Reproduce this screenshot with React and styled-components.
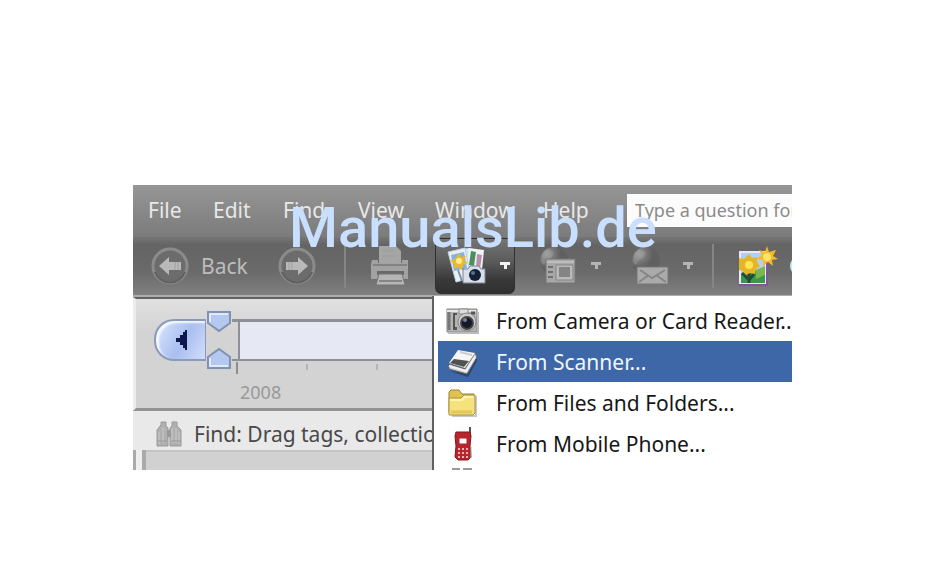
import React from "react";
import styled, { createGlobalStyle } from "styled-components";

const GlobalStyle = createGlobalStyle`
  * {
    box-sizing: border-box;
  }
  body {
    margin: 0;
    background: #fff;
    font-family: "Noto Sans", "Open Sans", sans-serif;
    font-size: 21px;
    line-height: 28px;
  }
  button, input {
    font: inherit;
    color: inherit;
    border: 0;
    padding: 0;
    margin: 0;
    background: none;
  }
  svg {
    display: block;
    flex: none;
  }
`;

const Page = styled.main`
  padding: 185px 158px 48px 133px;
`;

const AppWindow = styled.section`
  position: relative;
  overflow: hidden;
  background: #d3d3d3;
`;

const MenuBar = styled.nav`
  display: flex;
  align-items: center;
  height: 52px;
  padding: 0 0 2px 15px;
  overflow: hidden;
  color: #e8e8e8;
  background: linear-gradient(#969696, #7b7b7b);
`;

const MenuButton = styled.button`
  flex: none;
  width: ${(p) => p.$width}px;
  text-align: left;
`;

const Question = styled.input`
  flex: 1;
  min-width: 0;
  height: 33px;
  padding-left: 8px;
  background: #fcfcfc;
  font-size: 18px;
  &::placeholder {
    color: #8b8b8b;
    opacity: 1;
  }
`;

const Toolbar = styled.div`
  display: flex;
  align-items: center;
  height: 60px;
  padding-left: 18px;
  overflow: hidden;
  color: #bdbdbd;
  border-bottom: 2px solid #acacac;
  background: linear-gradient(#767676, #646464 14%, #6a6a6a 60%, #808080);
`;

const ToolButton = styled.button`
  display: flex;
  flex: none;
  align-items: center;
  gap: 12px;
  width: ${(p) => p.$width}px;
  height: 56px;
`;

const ActiveTool = styled(ToolButton)`
  padding-left: 11px;
  border: 1px solid #303030;
  border-radius: 0 0 6px 6px;
  background: linear-gradient(#747474, #5c5c5c 40%, #393939 75%, #303030);
`;

const Divider = styled.span`
  flex: none;
  width: 2px;
  height: 44px;
  margin-right: 24px;
  background: #858585;
`;

const Timeline = styled.div`
  height: 114px;
  padding: 11px 0 0 18px;
  border-top: 2px solid #626262;
  border-bottom: 3px solid #929292;
  border-left: 3px solid #ececec;
  background: linear-gradient(#e0e0e0, #d3d3d3 30%);
`;

const TrackRow = styled.div`
  display: flex;
  align-items: center;
  height: 60px;
`;

const Earlier = styled.button`
  display: flex;
  flex: none;
  align-items: center;
  justify-content: center;
  width: 52px;
  height: 42px;
  border: 2px solid #8b9abb;
  border-right-width: 1px;
  border-radius: 20px 0 0 20px;
  box-shadow: inset 3px 2px 2px #f4f8ff;
  background: linear-gradient(120deg, #dce7ff, #a9bff0 55%, #d3ddfa);
`;

const Handles = styled.div`
  display: flex;
  flex: none;
  flex-direction: column;
  justify-content: space-between;
  width: 26px;
  height: 60px;
`;

const TrackStart = styled.span`
  flex: none;
  width: 8px;
  height: 42px;
  border: solid #8f8f98;
  border-width: 3px 2px 2px 0;
`;

const Track = styled.div`
  flex: 1;
  height: 42px;
  border: solid #8f8f98;
  border-width: 3px 0 2px;
  background: #e6e9f4;
`;

const Ticks = styled.div`
  display: flex;
  gap: 68px;
  height: 20px;
  margin-top: -9px;
  padding-left: 82px;
`;

const Tick = styled.span`
  width: 2px;
  height: ${(p) => (p.$major ? 12 : 6)}px;
  margin-top: ${(p) => (p.$major ? 1 : 3)}px;
  background: ${(p) => (p.$major ? "#8d8d8d" : "#b5b5b5")};
`;

const Year = styled.div`
  padding-left: 86px;
  color: #999;
  font-size: 18px;
  line-height: 22px;
`;

const FindBar = styled.div`
  display: flex;
  align-items: center;
  gap: 11px;
  height: 39px;
  padding: 6px 0 0 22px;
  color: #484848;
  white-space: nowrap;
  background: #e9e9e9;
`;

const Photos = styled.div`
  height: 20px;
  border-left: 3px solid #aaa;
  background: #d1d1d1;
  box-shadow: inset 6px 0 #eee, inset 10px 0 #aaa, inset 0 2px #c4c4c4;
`;

const Dropdown = styled.div`
  position: absolute;
  top: 111px;
  right: 0;
  left: 299px;
  padding: 4px 0 0 4px;
  border-left: 2px solid #606060;
  background: #fff;
`;

const MenuItem = styled.button`
  display: flex;
  align-items: center;
  gap: 16px;
  width: 100%;
  height: 41px;
  padding-left: 8px;
  white-space: nowrap;
  color: ${(p) => (p.$selected ? "#eef6ff" : "#171717")};
  background: ${(p) => (p.$selected ? "#3e67a7" : "#fff")};
`;

const Watermark = styled.div`
  position: absolute;
  top: 196px;
  left: 289px;
  color: #c9dfff;
  font-family: Roboto, sans-serif;
  font-size: 56px;
  font-weight: 500;
  line-height: 64px;
`;

function CircleArrow({ flip }) {
  return (
    <svg width="38" height="38" viewBox="0 0 38 38" aria-hidden="true">
      <circle cx="19" cy="19" r="17" fill="#6c6c6c" stroke="#8b8b8b" strokeWidth="3" />
      <path d="M4 25A16 16 0 0 0 34 25" fill="none" stroke="#606060" strokeWidth="2" />
      <path
        d="M8 19 18 10v5h12v8H18v5Z"
        fill="#b9b9b9"
        transform={flip ? "translate(38 0) scale(-1 1)" : undefined}
      />
      <path
        d="M24 15v8M27 15v8"
        stroke="#a0a0a0"
        transform={flip ? "translate(38 0) scale(-1 1)" : undefined}
      />
    </svg>
  );
}

function PrinterIcon() {
  return (
    <svg width="40" height="42" viewBox="0 0 40 42" aria-hidden="true">
      <path d="M9 1h17l5 5v12H9Z" fill="#a5a5a5" />
      <path d="M12 6h13M12 11h14" stroke="#9b9b9b" />
      <path d="M2 15h6v3h24v-3h6v19H1V19Z" fill="#a2a2a2" />
      <path d="M3 20h34" stroke="#828282" strokeWidth="2" />
      <path d="M7 26h27v4H7Z" fill="#686868" />
      <path d="M9 29h23l3 11H6Z" fill="#b5b5b5" stroke="#777" />
      <path d="M9 36h23" stroke="#858585" strokeWidth="2" />
    </svg>
  );
}

function ImportIcon() {
  return (
    <svg width="40" height="40" viewBox="0 0 40 40" aria-hidden="true">
      <path d="m13 3 10-1 3 28-10 1Z" fill="#d8e6f2" />
      <path d="m22 2 15 2-3 30-15-2Z" fill="#edf5f8" />
      <path d="m24 5 5 1-2 14-5-1Z" fill="#49905c" />
      <path d="m30 8 5 1-2 14-4-1Z" fill="#bb8eaa" />
      <path d="m1 6 17-4 6 30-15 4Z" fill="#e7f0f8" stroke="#bcd1e6" />
      <path d="m4 9 13-3 3 16-13 3Z" fill="#84b3dc" />
      <path d="m12 7 2 4 5-1-2 4 4 3-5 2-1 5-4-3-4 2v-5l-4-3 5-2Z" fill="#edb92c" />
      <circle cx="12" cy="15" r="3" fill="#fff08a" />
      <path d="m11 24 4 11M16 22l3 11" stroke="#85939b" strokeWidth="2" />
      <path d="M16 23h5l2-3h9l2 3h4v14H16Z" fill="#d6dfea" stroke="#7d8794" />
      <circle cx="28" cy="29" r="6" fill="#172031" />
      <circle cx="26" cy="27" r="2" fill="#55709c" />
    </svg>
  );
}

function Caret({ light }) {
  return (
    <svg width="12" height="8" viewBox="0 0 12 8" aria-hidden="true">
      <path d="M1 0h10v3H8v4H5V3H1Z" fill={light ? "#f4f4f4" : "#b4b4b4"} />
    </svg>
  );
}

function Globe() {
  return (
    <>
      <circle cx="16" cy="14" r="14" fill="url(#globe)" />
      <path d="M4 8 9 2l7 3-2 5-5 3-3 5-3-3Z" fill="#999" opacity=".5" />
      <defs>
        <radialGradient id="globe" cx="25%" cy="25%">
          <stop stopColor="#aaa" />
          <stop offset=".5" stopColor="#797979" />
          <stop offset="1" stopColor="#606060" />
        </radialGradient>
      </defs>
    </>
  );
}

function WebIcon() {
  return (
    <svg width="40" height="38" viewBox="0 0 40 38" aria-hidden="true">
      <Globe />
      <path d="M8 12h29v24H8Z" fill="#a8a8a8" stroke="#777" />
      <path d="M9 15h27" stroke="#bdbdbd" strokeWidth="2" />
      <path d="M10 20h5M10 25h5M10 30h5" stroke="#707070" strokeWidth="2" />
      <path d="M18 18h17v15H18Z" fill="#bababa" stroke="#858585" />
      <path d="M21 20h11v10H21Z" fill="#848484" />
    </svg>
  );
}

function MailIcon() {
  return (
    <svg width="40" height="38" viewBox="0 0 40 38" aria-hidden="true">
      <Globe />
      <path d="M7 20h31v17H7Z" fill="#aaa" stroke="#777" />
      <path d="m10 23 12 8 13-8M9 35l10-7M36 35l-10-7" fill="none" stroke="#858585" strokeWidth="2" />
    </svg>
  );
}

function CreateIcon() {
  return (
    <svg width="40" height="42" viewBox="0 0 40 42" aria-hidden="true">
      <path d="M2 7h26v32H2Z" fill="#b1cff2" stroke="#ece5ff" strokeWidth="2" />
      <path d="M29 8v32H1" fill="none" stroke="#83549e" strokeWidth="2" />
      <path d="M3 29 17 25l10 3v10H3Z" fill="#38984b" />
      <path d="m18 25 9-4v9l-9 4Z" fill="#78b84c" />
      <path d="M11 25v13M10 34l-6-6M11 35l5-6" stroke="#254d32" strokeWidth="3" />
      <path d="m11 9 3 4 5-1v5l3 4-4 3-1 5-5-1-4 2-3-4-4-1V13l5 1Z" fill="#e5b528" />
      <circle cx="11" cy="20" r="4" fill="#ffe553" />
      <path d="m29 1 2 6 7-2-3 6 5 3-6 1 1 6-5-4-5 4v-6l-7-1 6-4-3-5 6 2Z" fill="#f5b927" />
      <circle cx="29" cy="12" r="4" fill="#ffe36a" />
    </svg>
  );
}

function Handle({ up }) {
  return (
    <svg width="26" height="23" viewBox="0 0 26 23" aria-hidden="true">
      <g transform={up ? "translate(0 23) scale(1 -1)" : undefined}>
        <path d="M2 2h22v11l-11 8L2 13Z" fill="#b5c9f0" stroke="#8191b2" strokeWidth="2" />
        <path d="M4 12V4h18" fill="none" stroke="#dfeaff" strokeWidth="2" />
      </g>
    </svg>
  );
}

function Binoculars() {
  return (
    <svg width="28" height="28" viewBox="0 0 28 28" aria-hidden="true">
      <path d="M6 2h5v4l2 2v18H2V10l4-5ZM17 2h5v4l4 4v16H15V8l2-2Z" fill="#b0b0b0" stroke="#999" />
      <path d="M4 12v12M8 8v15M17 8v15M21 8v15M24 12v12" stroke="#cbcbcb" />
      <path d="M12 10h4v7h-4Z" fill="#999" />
      <path d="M2 21h10M16 21h10" stroke="#999" />
    </svg>
  );
}

function CameraIcon() {
  return (
    <svg width="34" height="30" viewBox="0 0 34 30" aria-hidden="true">
      <path d="M1 3h30v23H1Z" fill="#b3b3b3" stroke="#888" />
      <path d="M2 27h30V6" fill="none" stroke="#bbb" strokeWidth="2" />
      <path d="M1 5h29" stroke="#e5e5e5" strokeWidth="2" />
      <path d="M3 6v18" stroke="#777" strokeWidth="3" />
      <path d="M7 7h4v2H9v12h2v3H7Z" fill="#555" />
      <path d="M13 3h9v5h-9Z" fill="#ddd" stroke="#888" />
      <path d="M25 7h4" stroke="#555" strokeWidth="3" />
      <circle cx="21" cy="16" r="9" fill="#ccc" stroke="#888" />
      <circle cx="21" cy="17" r="7" fill="#444" />
      <circle cx="21" cy="17" r="5" fill="#151a27" />
      <circle cx="19" cy="14" r="2" fill="#778095" />
    </svg>
  );
}

function ScannerIcon() {
  return (
    <svg width="34" height="30" viewBox="0 0 34 30" aria-hidden="true">
      <path d="m4 24 18 6 9-16v-4L22 26Z" fill="#29456e" />
      <path d="m3 17 16 5L29 6l2 4-10 17L3 22Z" fill="#d4d4d4" stroke="#666" />
      <path d="M12 3 29 6 19 21 3 16Z" fill="#f6f6f6" />
      <path d="m8 12 15 2-5 6-14-4Z" fill="#50544c" />
      <path d="m14 5 12 3" stroke="#ccc" strokeWidth="2" />
      <path d="m3 19 17 5 9-14" fill="none" stroke="#f1f1f1" strokeWidth="2" />
    </svg>
  );
}

function FolderIcon() {
  return (
    <svg width="34" height="30" viewBox="0 0 34 30" aria-hidden="true">
      <path d="M6 28h24V8" fill="none" stroke="#c8c8c8" strokeWidth="2" />
      <path d="M3 4 5 2h8l3 4h12v19H3Z" fill="#e0c34f" stroke="#988139" />
      <path d="M3 10h12l3-3h11v18l-2 2H3Z" fill="#f6e27b" stroke="#aa9240" />
      <path d="M4 12h12l3-3h8" fill="none" stroke="#fff4b3" strokeWidth="2" />
      <path d="M5 24h21" stroke="#e4c75b" strokeWidth="3" />
    </svg>
  );
}

function PhoneIcon() {
  return (
    <svg width="34" height="36" viewBox="0 0 34 36" aria-hidden="true">
      <path d="M24 1v8" stroke="#555" strokeWidth="2" />
      <path d="M10 6h14l1 4-1 10 1 11-3 3H12l-3-3 1-11-1-10Z" fill="#b8252c" stroke="#84151c" />
      <path d="M13 12h8v6h-8Z" fill="#fff" stroke="#a8272b" />
      <path d="M12 23h10M12 27h10M12 31h10" stroke="#f6b0ae" strokeWidth="2" strokeDasharray="2 2" />
      <path d="M25 21v11" stroke="#aaa" />
    </svg>
  );
}

function MoreIcon() {
  return (
    <svg width="34" height="34" viewBox="0 0 34 34" aria-hidden="true">
      <path d="M6 1h8M17 1h9" stroke="#999" strokeWidth="3" />
    </svg>
  );
}

const menus = [
  ["File", 65],
  ["Edit", 70],
  ["Find", 75],
  ["View", 77],
  ["Window", 108],
  ["Help", 84],
];

const sources = [
  { label: "From Camera or Card Reader...", icon: <CameraIcon /> },
  { label: "From Scanner...", icon: <ScannerIcon />, selected: true },
  { label: "From Files and Folders...", icon: <FolderIcon /> },
  { label: "From Mobile Phone...", icon: <PhoneIcon /> },
];

function App() {
  return (
    <Page>
      <GlobalStyle />
      <AppWindow>
        <MenuBar>
          {menus.map(([label, width]) => (
            <MenuButton key={label} $width={width}>
              {label}
            </MenuButton>
          ))}
          <Question aria-label="Question" placeholder="Type a question for help" />
        </MenuBar>
        <Toolbar>
          <ToolButton $width={127}>
            <CircleArrow />
            Back
          </ToolButton>
          <ToolButton $width={66} aria-label="Forward">
            <CircleArrow flip />
          </ToolButton>
          <Divider />
          <ToolButton $width={65} aria-label="Print">
            <PrinterIcon />
          </ToolButton>
          <ActiveTool $width={80} aria-label="Import">
            <ImportIcon />
            <Caret light />
          </ActiveTool>
          <ToolButton as="span" $width={23} />
          <ToolButton $width={92} aria-label="Share online">
            <WebIcon />
            <Caret />
          </ToolButton>
          <ToolButton $width={82} aria-label="Send by mail">
            <MailIcon />
            <Caret />
          </ToolButton>
          <Divider />
          <ToolButton $width={120} aria-label="Create">
            <CreateIcon />
            <svg width="22" height="22" viewBox="0 0 22 22" aria-hidden="true">
              <circle cx="10" cy="11" r="10" fill="#c5e7f8" />
            </svg>
          </ToolButton>
        </Toolbar>
        <Timeline>
          <TrackRow>
            <Earlier aria-label="Earlier">
              <svg width="12" height="20" viewBox="0 0 12 20" aria-hidden="true">
                <path d="M12 0v20h-2v-2H8v-3H5v-3H1V8h4V5h3V2h2V0Z" fill="#0c184b" />
              </svg>
            </Earlier>
            <Handles>
              <Handle />
              <Handle up />
            </Handles>
            <TrackStart />
            <Track />
          </TrackRow>
          <Ticks>
            <Tick $major />
            <Tick />
            <Tick />
          </Ticks>
          <Year>2008</Year>
        </Timeline>
        <FindBar>
          <Binoculars />
          Find: Drag tags, collections
        </FindBar>
        <Photos />
        <Dropdown>
          {sources.map(({ label, icon, selected }) => (
            <MenuItem key={label} $selected={selected}>
              {icon}
              {label}
            </MenuItem>
          ))}
          <MenuItem aria-label="More sources">
            <MoreIcon />
          </MenuItem>
        </Dropdown>
      </AppWindow>
      <Watermark>ManualsLib.de</Watermark>
    </Page>
  );
}

export default App;
